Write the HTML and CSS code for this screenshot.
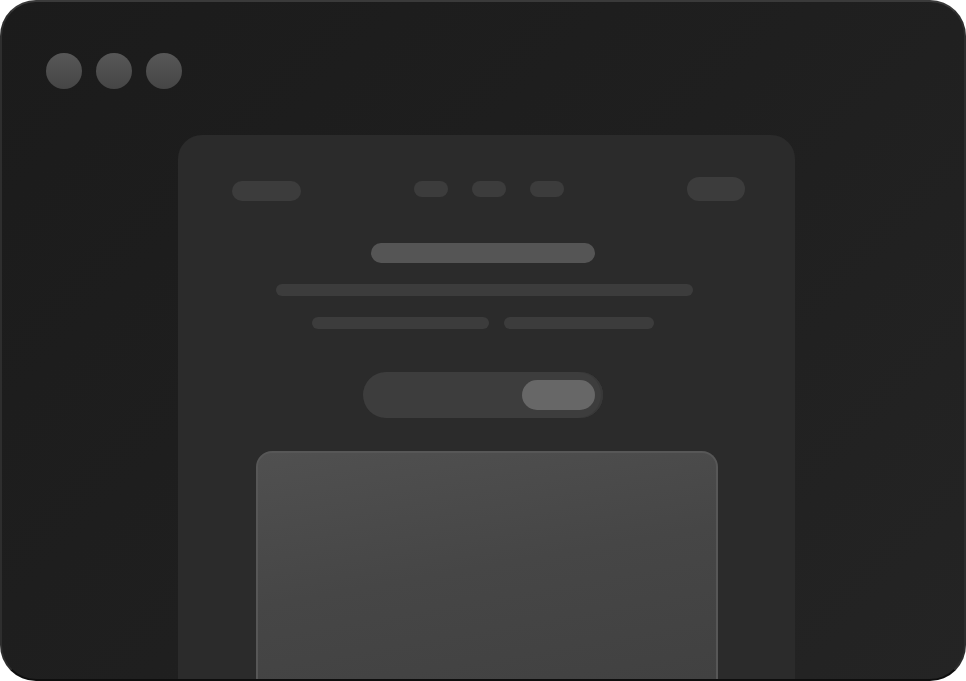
FILE: index.html
```html
<!DOCTYPE html>
<html lang="en">
<head>
  <meta charset="UTF-8">
  <title>Browser Mockup</title>
  <link rel="stylesheet" href="styles.css">
</head>
<body>
  <div class="window">
    <div class="dots">
      <span class="dot"></span>
      <span class="dot"></span>
      <span class="dot"></span>
    </div>
    <div class="panel">
      <div class="nav">
        <div class="logo"></div>
        <div class="links">
          <span class="link"></span>
          <span class="link"></span>
          <span class="link"></span>
        </div>
        <div class="cta"></div>
      </div>
      <div class="hero">
        <div class="title"></div>
        <div class="line line-wide"></div>
        <div class="line-pair">
          <div class="line line-a"></div>
          <div class="line line-b"></div>
        </div>
        <div class="signup">
          <div class="signup-btn"></div>
        </div>
      </div>
      <div class="card"></div>
    </div>
  </div>
</body>
</html>
```

FILE: styles.css
```css
html, body {
  margin: 0;
  background: #ffffff;
}
.window {
  box-sizing: border-box;
  width: 966px;
  height: 681px;
  border-radius: 36px;
  border: 2px solid #2e2e2e;
  border-top-color: #3a3a3a;
  border-bottom-color: #0e0e0e;
  background: linear-gradient(135deg, #1b1b1b 0%, #1f1f1f 50%, #242424 100%);
  display: flex;
  flex-direction: column;
  overflow: hidden;
}
.dots {
  display: flex;
  gap: 14px;
  margin: 51px 0 0 44px;
}
.dot {
  width: 36px;
  height: 36px;
  border-radius: 50%;
  background: linear-gradient(180deg, #575757, #454545);
}
.panel {
  box-sizing: border-box;
  width: 617px;
  flex: 1;
  margin: 46px 0 0 176px;
  border-radius: 24px 24px 0 0;
  background: #2b2b2b;
  padding: 42px 0 0;
  display: flex;
  flex-direction: column;
  align-items: center;
}
.nav {
  box-sizing: border-box;
  width: 100%;
  padding: 0 50px 0 54px;
  display: grid;
  grid-template-columns: 1fr auto 1fr;
  align-items: start;
}
.logo {
  width: 69px;
  height: 20px;
  margin-top: 4px;
  border-radius: 10px;
  background: #3c3c3c;
}
.links {
  display: flex;
  gap: 24px;
  margin-top: 4px;
}
.link {
  width: 34px;
  height: 16px;
  border-radius: 8px;
  background: #3c3c3c;
}
.cta {
  justify-self: end;
  width: 58px;
  height: 24px;
  border-radius: 12px;
  background: #3c3c3c;
}
.hero {
  display: flex;
  flex-direction: column;
  align-items: center;
  padding-right: 7px;
  margin-top: 42px;
}
.title {
  width: 224px;
  height: 20px;
  border-radius: 10px;
  background: #555555;
}
.line {
  height: 12px;
  border-radius: 6px;
  background: #3c3c3c;
}
.line-wide {
  width: 417px;
  margin-top: 21px;
  margin-left: 3px;
}
.line-pair {
  display: flex;
  gap: 15px;
  margin-top: 21px;
}
.line-a {
  width: 177px;
}
.line-b {
  width: 150px;
}
.signup {
  box-sizing: border-box;
  width: 240px;
  height: 46px;
  margin-top: 43px;
  border-radius: 23px;
  background: #3d3d3d;
  box-shadow: inset -2px 0 0 #383838;
  display: flex;
  align-items: center;
  justify-content: flex-end;
  padding-right: 8px;
}
.signup-btn {
  width: 73px;
  height: 30px;
  border-radius: 15px;
  background: #676767;
}
.card {
  box-sizing: border-box;
  width: 462px;
  flex: 1;
  margin-top: 33px;
  border: 2px solid #575757;
  border-bottom: none;
  border-radius: 16px 16px 0 0;
  background: linear-gradient(170deg, #505050 0%, #464646 50%, #414141 100%);
}
```
